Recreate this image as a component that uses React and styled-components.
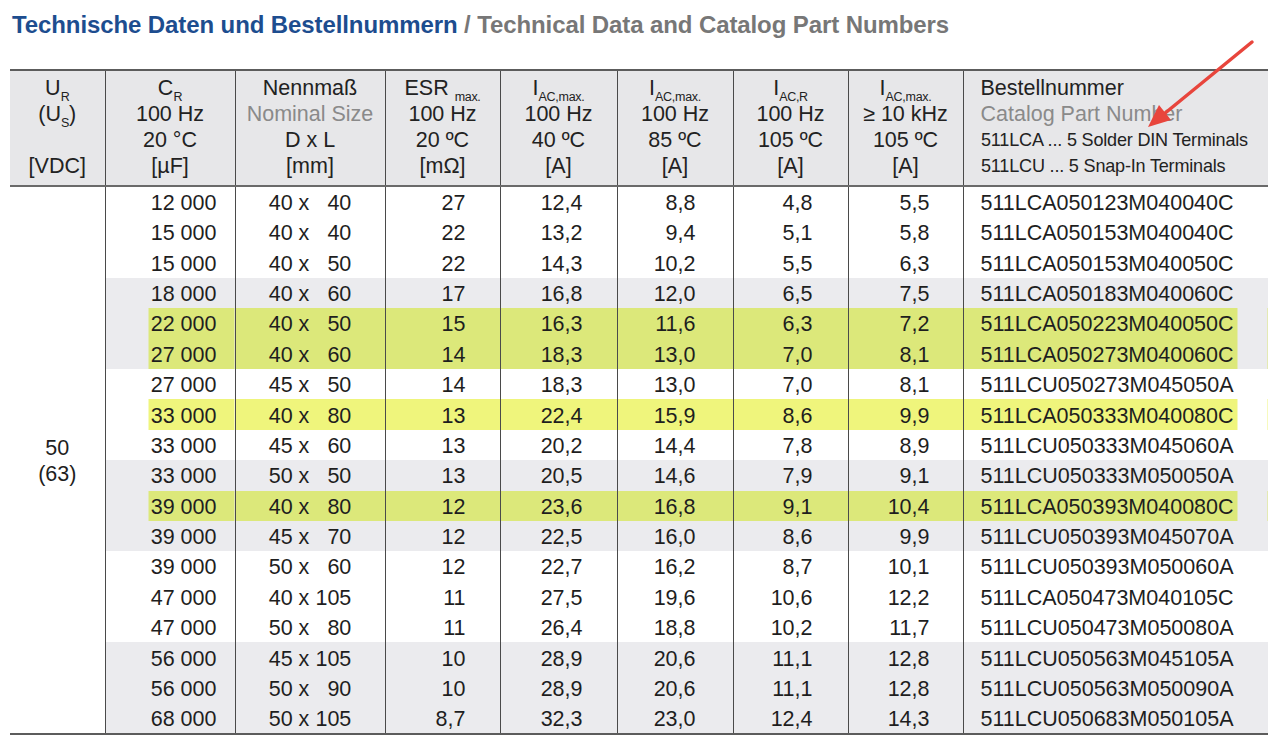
import React from "react";
import styled, { createGlobalStyle } from "styled-components";

const Global = createGlobalStyle`
  html, body { margin: 0; padding: 0; background: #fff; }
  body { font-family: "Liberation Sans", Arial, sans-serif; color: #222; }
`;

const Page = styled.div`
  position: relative;
  width: 1280px;
  height: 737px;
  overflow: hidden;
  background: #fff;
`;

const Title = styled.h1`
  margin: 11px 0 30px 12px;
  font-size: 24px;
  line-height: 28px;
  font-weight: 700;
  letter-spacing: -0.1px;
  color: #1d4d8f;
`;

const TitleGrey = styled.span`
  color: #777;
`;

const Table = styled.table`
  margin-left: 10px;
  width: 1258px;
  table-layout: fixed;
  border-collapse: collapse;
  font-size: 21.5px;
  border-top: 2px solid #5c5c5c;
  border-bottom: 2px solid #5c5c5c;
`;

const HeadRow = styled.tr`
  background: #e7e7e9;
  border-bottom: 2px solid #6a6a6a;
`;

const Th = styled.th`
  font-weight: 400;
  padding: ${(p) => (p.$left ? "4px 4px 6px 17px" : "4px 2px 6px")};
  text-align: ${(p) => (p.$left ? "left" : "center")};
  vertical-align: top;
  border-left: ${(p) => (p.$first ? "none" : "1px solid #4a4a4a")};
  color: #222;
`;

const HLine = styled.div`
  height: 26px;
  line-height: 26px;
  white-space: nowrap;
  color: ${(p) => (p.$grey ? "#8a8a8a" : "#222")};
`;

const SmallLine = styled.div`
  height: 26px;
  line-height: 26px;
  white-space: nowrap;
  font-size: 19px;
  transform: scaleX(0.95);
  transform-origin: left center;
  letter-spacing: -0.2px;
`;

const Sub = styled.span`
  font-size: 12.5px;
  line-height: 0;
  vertical-align: -6px;
  letter-spacing: -0.3px;
`;

const BodyRow = styled.tr`
  height: 30.4px;
`;

const WHITE = "#ffffff";
const BAND = "#ebebee";
const HL_WHITE = "#eff57c";
const HL_BAND = "#dce87a";

const cellBg = ({ $band, $hl, $pos }) => {
  const base = $band ? BAND : WHITE;
  if (!$hl) return base;
  const hl = $band ? HL_BAND : HL_WHITE;
  if ($pos === "start") return `linear-gradient(to right, ${base} 43px, ${hl} 43px)`;
  if ($pos === "end") return `linear-gradient(to right, ${hl} 274px, ${base} 274px)`;
  return hl;
};

const Td = styled.td`
  padding: 2px ${(p) => p.$pr ?? 0}px 0 ${(p) => p.$pl ?? 0}px;
  height: 28px;
  line-height: 28px;
  text-align: ${(p) => p.$align || "right"};
  white-space: nowrap;
  border-left: 1px solid #4a4a4a;
  background: ${cellBg};
  color: #1e1e1e;
`;

const VoltCell = styled.td`
  text-align: center;
  vertical-align: middle;
  background: #fff;
  line-height: 26px;
  padding: 2px 0 0;
  color: #1e1e1e;
`;

const Size = styled.span`
  display: inline-flex;
  gap: 6px;
`;

const SizeNum = styled.span`
  display: inline-block;
  min-width: 36px;
  text-align: right;
`;

const Arrow = styled.svg`
  position: absolute;
  left: 1140px;
  top: 34px;
  width: 120px;
  height: 100px;
  pointer-events: none;
  overflow: visible;
`;

const rows = [
  ["12 000", "40", "40", "27", "12,4", "8,8", "4,8", "5,5", "511LCA050123M040040C"],
  ["15 000", "40", "40", "22", "13,2", "9,4", "5,1", "5,8", "511LCA050153M040040C"],
  ["15 000", "40", "50", "22", "14,3", "10,2", "5,5", "6,3", "511LCA050153M040050C"],
  ["18 000", "40", "60", "17", "16,8", "12,0", "6,5", "7,5", "511LCA050183M040060C"],
  ["22 000", "40", "50", "15", "16,3", "11,6", "6,3", "7,2", "511LCA050223M040050C", true],
  ["27 000", "40", "60", "14", "18,3", "13,0", "7,0", "8,1", "511LCA050273M040060C", true],
  ["27 000", "45", "50", "14", "18,3", "13,0", "7,0", "8,1", "511LCU050273M045050A"],
  ["33 000", "40", "80", "13", "22,4", "15,9", "8,6", "9,9", "511LCA050333M040080C", true],
  ["33 000", "45", "60", "13", "20,2", "14,4", "7,8", "8,9", "511LCU050333M045060A"],
  ["33 000", "50", "50", "13", "20,5", "14,6", "7,9", "9,1", "511LCU050333M050050A"],
  ["39 000", "40", "80", "12", "23,6", "16,8", "9,1", "10,4", "511LCA050393M040080C", true],
  ["39 000", "45", "70", "12", "22,5", "16,0", "8,6", "9,9", "511LCU050393M045070A"],
  ["39 000", "50", "60", "12", "22,7", "16,2", "8,7", "10,1", "511LCU050393M050060A"],
  ["47 000", "40", "105", "11", "27,5", "19,6", "10,6", "12,2", "511LCA050473M040105C"],
  ["47 000", "50", "80", "11", "26,4", "18,8", "10,2", "11,7", "511LCU050473M050080A"],
  ["56 000", "45", "105", "10", "28,9", "20,6", "11,1", "12,8", "511LCU050563M045105A"],
  ["56 000", "50", "90", "10", "28,9", "20,6", "11,1", "12,8", "511LCU050563M050090A"],
  ["68 000", "50", "105", "8,7", "32,3", "23,0", "12,4", "14,3", "511LCU050683M050105A"],
];

const isBand = (i) => Math.floor(i / 3) % 2 === 1;

export default function App() {
  return (
    <Page>
      <Global />
      <Title>
        Technische Daten und Bestellnummern <TitleGrey>/ Technical Data and Catalog Part Numbers</TitleGrey>
      </Title>
      <Table>
        <colgroup>
          <col style={{ width: 95 }} />
          <col style={{ width: 130 }} />
          <col style={{ width: 150 }} />
          <col style={{ width: 115 }} />
          <col style={{ width: 117 }} />
          <col style={{ width: 116 }} />
          <col style={{ width: 115 }} />
          <col style={{ width: 115 }} />
          <col style={{ width: 305 }} />
        </colgroup>
        <thead>
          <HeadRow>
            <Th $first>
              <HLine>U<Sub>R</Sub></HLine>
              <HLine>(U<Sub>S</Sub>)</HLine>
              <HLine />
              <HLine>[VDC]</HLine>
            </Th>
            <Th>
              <HLine>C<Sub>R</Sub></HLine>
              <HLine>100 Hz</HLine>
              <HLine>20 °C</HLine>
              <HLine>[µF]</HLine>
            </Th>
            <Th>
              <HLine>Nennmaß</HLine>
              <HLine $grey>Nominal Size</HLine>
              <HLine>D x L</HLine>
              <HLine>[mm]</HLine>
            </Th>
            <Th>
              <HLine>ESR <Sub>max.</Sub></HLine>
              <HLine>100 Hz</HLine>
              <HLine>20 ºC</HLine>
              <HLine>[mΩ]</HLine>
            </Th>
            <Th>
              <HLine>I<Sub>AC,max.</Sub></HLine>
              <HLine>100 Hz</HLine>
              <HLine>40 ºC</HLine>
              <HLine>[A]</HLine>
            </Th>
            <Th>
              <HLine>I<Sub>AC,max.</Sub></HLine>
              <HLine>100 Hz</HLine>
              <HLine>85 ºC</HLine>
              <HLine>[A]</HLine>
            </Th>
            <Th>
              <HLine>I<Sub>AC,R</Sub></HLine>
              <HLine>100 Hz</HLine>
              <HLine>105 ºC</HLine>
              <HLine>[A]</HLine>
            </Th>
            <Th>
              <HLine>I<Sub>AC,max.</Sub></HLine>
              <HLine>≥ 10 kHz</HLine>
              <HLine>105 ºC</HLine>
              <HLine>[A]</HLine>
            </Th>
            <Th $left>
              <HLine>Bestellnummer</HLine>
              <HLine $grey>Catalog Part Number</HLine>
              <SmallLine>511LCA ... 5 Solder DIN Terminals</SmallLine>
              <SmallLine>511LCU ... 5 Snap-In Terminals</SmallLine>
            </Th>
          </HeadRow>
        </thead>
        <tbody>
          {rows.map((r, i) => {
            const band = isBand(i);
            const hl = !!r[9];
            const common = { $band: band, $hl: hl };
            return (
              <BodyRow key={i}>
                {i === 0 && (
                  <VoltCell rowSpan={rows.length}>
                    50
                    <br />
                    (63)
                  </VoltCell>
                )}
                <Td {...common} $pos="start" $pr={18}>{r[0]}</Td>
                <Td {...common} $align="center">
                  <Size>
                    <span>{r[1]} x</span>
                    <SizeNum>{r[2]}</SizeNum>
                  </Size>
                </Td>
                <Td {...common} $pr={34}>{r[3]}</Td>
                <Td {...common} $pr={34}>{r[4]}</Td>
                <Td {...common} $pr={37}>{r[5]}</Td>
                <Td {...common} $pr={35}>{r[6]}</Td>
                <Td {...common} $pr={33}>{r[7]}</Td>
                <Td {...common} $pos="end" $align="left" $pl={17}>{r[8]}</Td>
              </BodyRow>
            );
          })}
        </tbody>
      </Table>
      <Arrow viewBox="0 0 120 100">
        <line x1="112" y1="8" x2="24" y2="80" stroke="#e8453c" strokeWidth="3.5" strokeLinecap="round" />
        <polygon points="8,93 31,86 19,71" fill="#e8453c" />
      </Arrow>
    </Page>
  );
}
